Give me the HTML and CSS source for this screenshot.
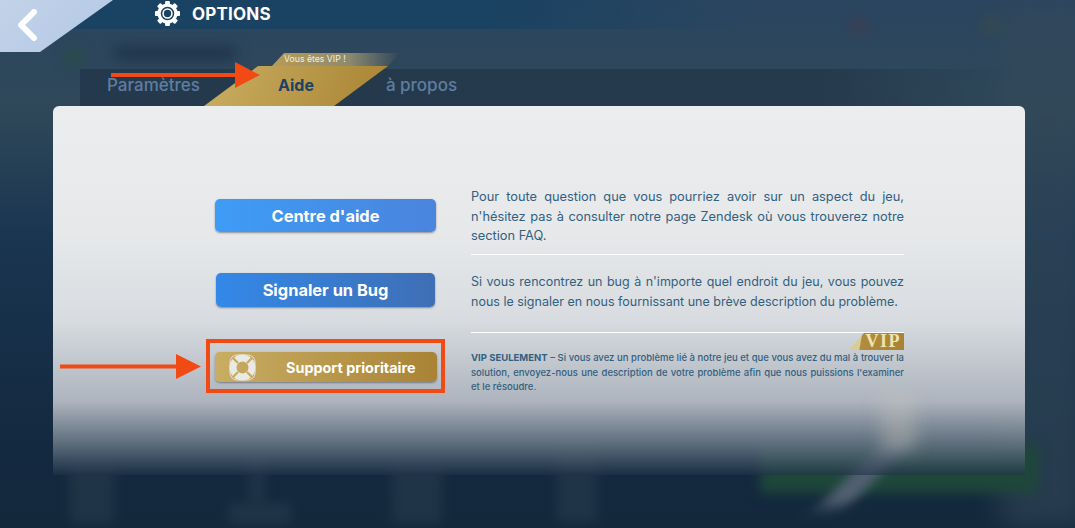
FILE: index.html
```html
<!DOCTYPE html>
<html lang="fr">
<head>
    <meta charset="UTF-8">
    <meta name="viewport" content="width=device-width, initial-scale=1.0">
    <title>Options - Aide</title>
    <link rel="stylesheet" href="styles.css">
</head>
<body>
    <div class="screen">
        <!-- blurred game scene behind the menu -->
        <div class="scene">
            <span class="blob blob-green-top"></span>
            <span class="blob blob-dark-top"></span>
            <span class="blob blob-red"></span>
            <span class="blob blob-olive"></span>
            <span class="blob blob-grey-right"></span>
            <span class="blob blob-green"></span>
            <span class="blob blob-streak"></span>
            <span class="blob blob-col col-1"></span>
            <span class="blob blob-col col-2"></span>
            <span class="blob blob-col col-2b"></span>
            <span class="blob blob-col col-3"></span>
            <span class="blob blob-col col-4"></span>
        </div>

        <a class="back-btn" href="#" aria-label="Retour">
            <svg width="24" height="32" viewBox="0 0 24 32">
                <polyline points="18,3 5,16 18,29" fill="none" stroke="#fff" stroke-width="6" stroke-linecap="round" stroke-linejoin="round"/>
            </svg>
        </a>

        <header class="topbar">
            <svg class="gear" width="27" height="27" viewBox="0 0 28 28">
                <g fill="#fff">
                    <circle cx="14" cy="14" r="10.500"/>
                    <rect x="11.500" y="1" width="5" height="26" rx="1"/>
                    <rect x="11.500" y="1" width="5" height="26" rx="1" transform="rotate(45 14 14)"/>
                    <rect x="11.500" y="1" width="5" height="26" rx="1" transform="rotate(90 14 14)"/>
                    <rect x="11.500" y="1" width="5" height="26" rx="1" transform="rotate(135 14 14)"/>
                </g>
                <circle cx="14" cy="14" r="7" fill="#1b4261"/>
                <circle cx="14" cy="14" r="4.600" fill="none" stroke="#fff" stroke-width="1.600"/>
            </svg>
            <h1>OPTIONS</h1>
        </header>

        <nav class="tabs">
            <a class="tab tab-settings" href="#">Paramètres</a>
            <div class="tab-active">
                <span class="vip-strip">Vous êtes VIP !</span>
                <a class="tab-gold" href="#"><span>Aide</span></a>
            </div>
            <a class="tab tab-about" href="#">à propos</a>
        </nav>

        <main class="panel">
            <span class="panel-glow"></span>
            <div class="help-grid">
                <div class="btn-cell">
                    <a class="btn btn-help" href="#">Centre d'aide</a>
                </div>
                <p class="help-text first">Pour toute question que vous pourriez avoir sur un aspect du jeu, n'hésitez pas à consulter notre page Zendesk où vous trouverez notre section FAQ.</p>

                <div class="btn-cell second">
                    <a class="btn btn-bug" href="#">Signaler un Bug</a>
                </div>
                <p class="help-text middle">Si vous rencontrez un bug à n'importe quel endroit du jeu, vous pouvez nous le signaler en nous fournissant une brève description du problème.</p>

                <div class="btn-cell third">
                    <div class="highlight">
                        <a class="btn btn-vip" href="#">
                            <svg class="buoy" width="27" height="27" viewBox="0 0 27 27">
                                <rect x="1" y="1" width="25" height="25" rx="7" fill="none" stroke="#e6e3da" stroke-width="1"/>
                                <circle cx="13.500" cy="13.500" r="9.500" fill="none" stroke="#e9e9e6" stroke-width="7"/>
                                <g stroke="#c7a860" stroke-width="2.200">
                                    <line x1="4" y1="4" x2="9" y2="9"/>
                                    <line x1="23" y1="4" x2="18" y2="9"/>
                                    <line x1="4" y1="23" x2="9" y2="18"/>
                                    <line x1="23" y1="23" x2="18" y2="18"/>
                                </g>
                            </svg>
                            <span>Support prioritaire</span>
                        </a>
                    </div>
                </div>
                <div class="vip-cell">
                    <div class="vip-badge"><span>VIP</span></div>
                    <p class="vip-text"><strong>VIP SEULEMENT</strong> – Si vous avez un problème lié à notre jeu et que vous avez du mal à trouver la solution, envoyez-nous une description de votre problème afin que nous puissions l'examiner et le résoudre.</p>
                </div>
            </div>
        </main>

        <!-- tutorial arrows -->
        <svg class="arrow arrow-tab" width="150" height="26" viewBox="0 0 150 26">
            <path d="M0 11h124V0l25 13-25 13V15H0z" fill="#f24a15"/>
        </svg>
        <svg class="arrow arrow-vip" width="141" height="25" viewBox="0 0 141 25">
            <path d="M0 10.500h116V0l25 12.500-25 12.500V14.500H0z" fill="#f24a15"/>
        </svg>
    </div>
</body>
</html>
```

FILE: styles.css
```css
/* Reset and Base Styles */
* {
    margin: 0;
    padding: 0;
    box-sizing: border-box;
}

body {
    font-family: 'Inter', 'Liberation Sans', sans-serif;
    background: #14283f;
    overflow: hidden;
}

a {
    text-decoration: none;
}

.screen {
    position: relative;
    width: 1075px;
    height: 528px;
    overflow: hidden;
    background: linear-gradient(180deg, #2b4560 0%, #2f4859 20%, #1a3550 45%, #13293f 85%, #14283c 100%);
}

/* Blurred scene */
.scene {
    position: absolute;
    inset: 0;
}

.blob {
    position: absolute;
    display: block;
    filter: blur(7px);
}

.blob-green-top {
    left: 68px;
    top: 50px;
    width: 14px;
    height: 14px;
    background: #27503f;
}

.blob-dark-top {
    left: 115px;
    top: 48px;
    width: 120px;
    height: 10px;
    background: #1a2e44;
}

.blob-red {
    left: 852px;
    top: 20px;
    width: 14px;
    height: 12px;
    background: #4d3a46;
    opacity: 0.7;
}

.blob-olive {
    left: 984px;
    top: 19px;
    width: 14px;
    height: 12px;
    background: #45503a;
    opacity: 0.7;
}

.blob-grey-right {
    left: 1000px;
    top: 0;
    width: 90px;
    height: 528px;
    background: #34495a;
    opacity: 0.6;
    filter: blur(14px);
}

.blob-green {
    left: 760px;
    top: 445px;
    width: 278px;
    height: 48px;
    background: #1e473a;
    filter: blur(6px);
}

.blob-streak {
    left: 855px;
    top: 433px;
    width: 30px;
    height: 74px;
    background: #505f70;
    transform: skewX(-45deg);
    filter: blur(7px);
}

.blob-col {
    top: 465px;
    background: #2a3e50;
    opacity: 0.55;
    filter: blur(6px);
}

.col-1 {
    left: 70px;
    width: 44px;
    height: 58px;
}

.col-2 {
    left: 249px;
    top: 458px;
    width: 16px;
    height: 45px;
}

.col-2b {
    left: 228px;
    top: 503px;
    width: 64px;
    height: 22px;
}

.col-3 {
    left: 392px;
    width: 50px;
    height: 58px;
}

.col-4 {
    left: 557px;
    top: 452px;
    width: 40px;
    height: 70px;
}

/* Top bar */
.topbar {
    position: relative;
    height: 29px;
    display: flex;
    align-items: center;
    gap: 11px;
    padding: 0 0 2px 154px;
    background: linear-gradient(90deg, #1a4262 0%, #1a4262 45%, rgba(43, 69, 96, 0) 70%);
}

.topbar h1 {
    font-size: 17px;
    font-weight: 700;
    color: #fff;
    letter-spacing: 0.2px;
}

.back-btn {
    position: absolute;
    z-index: 3;
    top: 0;
    left: 0;
    width: 113px;
    height: 52px;
    padding: 9px 0 0 16px;
    background: linear-gradient(135deg, #c2d2e8 0%, #b4c9e6 100%);
    clip-path: polygon(0 0, 100% 0, 40px 100%, 0 100%);
}

/* Tabs */
.tabs {
    position: relative;
    height: 37px;
    margin: 40px 0 0 80px;
    padding-bottom: 5px;
    width: 930px;
    display: flex;
    align-items: center;
    background: linear-gradient(90deg, #25394e 0%, #263a4d 80%, rgba(38, 58, 77, 0) 100%);
}

.tab {
    font-size: 17px;
    font-weight: 500;
    color: #5f7e9f;
}

.tab-settings {
    margin-left: 27px;
}

.tab-about {
    margin-left: 186px;
}

.tab-active {
    position: absolute;
    left: 124px;
    top: -16px;
    width: 200px;
    height: 53px;
}

.vip-strip {
    position: absolute;
    left: 68px;
    top: 0;
    width: 128px;
    height: 13px;
    padding-left: 12px;
    font-size: 8.700px;
    line-height: 13px;
    color: #f3efe2;
    background: linear-gradient(90deg, #b69c55 0%, #8d8a70 60%, rgba(90, 95, 95, 0) 100%);
    clip-path: polygon(12px 0, 100% 0, 116px 100%, 0 100%);
}

.tab-gold {
    position: absolute;
    left: 0;
    bottom: 0;
    width: 184px;
    height: 40px;
    padding: 9px 0 0 74px;
    background: linear-gradient(110deg, #c9ae62 0%, #a98433 100%);
    clip-path: polygon(54px 0, 100% 0, 130px 100%, 0 100%);
}

.tab-gold span {
    font-size: 16px;
    font-weight: 700;
    color: #1c4366;
}

/* Main panel */
.panel {
    position: absolute;
    left: 53px;
    top: 106px;
    width: 972px;
    height: 369px;
    padding: 81px 121px 0 152px;
    border-radius: 6px 6px 0 0;
    background: linear-gradient(180deg, #ebedef 0%, #e6e8ea 35%, #d8dce0 58%, #aeb4be 80%, rgba(110, 125, 138, 0.85) 91%, rgba(30, 50, 72, 0.6) 100%);
}

.panel-glow {
    position: absolute;
    left: 828px;
    top: 288px;
    width: 34px;
    height: 56px;
    background: rgba(200, 199, 190, 0.35);
    filter: blur(9px);
}

.help-grid {
    position: relative;
    display: grid;
    grid-template-columns: 241px 433px;
    grid-template-rows: 68px 78px auto;
    column-gap: 25px;
}

.btn-cell {
    display: flex;
    justify-content: center;
    padding-top: 12px;
}

.btn-cell.second {
    padding-top: 18px;
}

.btn-cell.third {
    padding-top: 6px;
}

.btn {
    display: flex;
    align-items: center;
    justify-content: center;
    border-radius: 5px;
    color: #fff;
    font-weight: 700;
    box-shadow: 0 1px 2px rgba(60, 70, 80, 0.55);
}

.btn-help {
    width: 221px;
    height: 33px;
    font-size: 16.400px;
    background: linear-gradient(90deg, #3e9cf6 0%, #4a84dd 100%);
}

.btn-bug {
    width: 219px;
    height: 34px;
    font-size: 16.400px;
    background: linear-gradient(90deg, #3388e8 0%, #3f6fb5 100%);
}

.highlight {
    width: 239px;
    height: 54px;
    padding: 9px 4px 0 5px;
    border: 4px solid #f24a15;
}

.btn-vip {
    position: relative;
    width: 222px;
    height: 30px;
    justify-content: flex-start;
    gap: 30px;
    padding-left: 14px;
    font-size: 14.400px;
    background: linear-gradient(90deg, #c8ad63 0%, #a98335 100%);
}

.help-text {
    font-size: 12.800px;
    line-height: 19.500px;
    color: #33607f;
    text-align: justify;
    border-bottom: 1px solid #fff;
}

.help-text.first {
    height: 68px;
}

.help-text.middle {
    height: 78px;
    padding-top: 17px;
    font-size: 12.500px;
}

.vip-cell {
    position: relative;
}

.vip-badge {
    display: flex;
    justify-content: flex-end;
    align-items: center;
    margin-left: auto;
    width: 55px;
    height: 17px;
    padding-right: 3px;
    background: linear-gradient(100deg, #d9cb93 0%, #d9cb93 22%, #b08c3c 24%, #a98335 100%);
    clip-path: polygon(15px 0, 100% 0, 100% 100%, 0 100%);
}

.vip-badge span {
    font-family: 'Liberation Serif', serif;
    font-size: 18px;
    font-weight: 700;
    line-height: 17px;
    letter-spacing: 1.500px;
    color: #efe3b0;
}

.vip-text {
    margin-top: 1px;
    font-size: 9.500px;
    font-weight: 500;
    line-height: 14.500px;
    color: #33607f;
    text-align: justify;
}

/* Arrows */
.arrow {
    position: absolute;
    z-index: 4;
}

.arrow-tab {
    left: 111px;
    top: 62px;
}

.arrow-vip {
    left: 60px;
    top: 354px;
}
```
